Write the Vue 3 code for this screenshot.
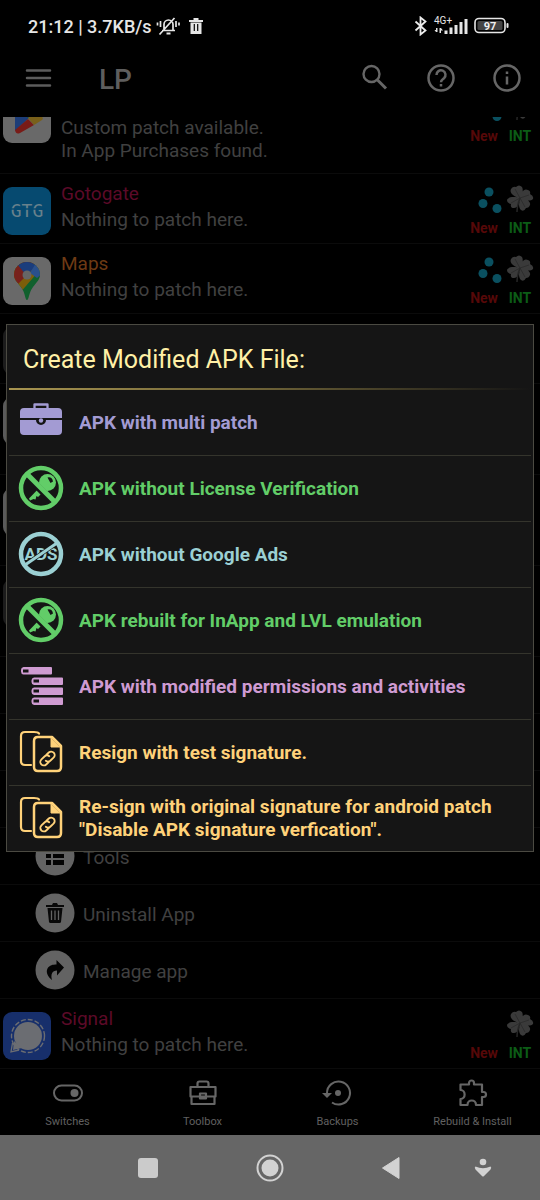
<script setup>
const apps = [
  { id: 'play', icon: 'play', title: '', tone: 'rose', lines: ['Custom patch available.', 'In App Purchases found.'], dots: true, kind: 'first' },
  { id: 'gtg', icon: 'gtg', title: 'Gotogate', tone: 'rose', lines: ['Nothing to patch here.'], dots: true },
  { id: 'maps', icon: 'maps', title: 'Maps', tone: 'orange', lines: ['Nothing to patch here.'], dots: true },
]
const covered = [
  { id: 'c1', kind: 'short', tone: 'dark' },
  { id: 'c2', kind: 'tall', tone: 'light' },
  { id: 'c3', kind: 'tall', tone: 'light' },
  { id: 'c4', kind: 'tall', tone: 'dark' },
  { id: 'c5', kind: 'sub' },
  { id: 'c6', kind: 'sub' },
  { id: 'c7', kind: 'sub' },
]
const actions = [
  { icon: 'tools', label: 'Tools' },
  { icon: 'trash', label: 'Uninstall App' },
  { icon: 'share', label: 'Manage app' },
]
const signal = { id: 'signal', icon: 'signal', title: 'Signal', tone: 'rose', lines: ['Nothing to patch here.'], dots: false }
const options = [
  { icon: 'case', tone: 'violet', label: 'APK with multi patch' },
  { icon: 'nokey', tone: 'green', label: 'APK without License Verification' },
  { icon: 'noads', tone: 'teal', label: 'APK without Google Ads' },
  { icon: 'nokey', tone: 'green', label: 'APK rebuilt for InApp and LVL emulation' },
  { icon: 'list', tone: 'orchid', label: 'APK with modified permissions and activities' },
  { icon: 'docs', tone: 'amber', label: 'Resign with test signature.' },
  { icon: 'docs', tone: 'amber', label: 'Re-sign with original signature for android patch "Disable APK signature verfication".' },
]
const rows = [...apps, ...covered.map(c => ({ ...c, covered: true })), ...actions.map(a => ({ ...a, id: a.label, action: true })), signal]
</script>

<template>
  <div class="screen">
    <header class="status">
      <span class="clock">21:12 | 3.7KB/s</span>
      <svg class="bell" width="24" height="20" viewBox="0 0 24 20" fill="none" stroke="#e6e6e6" stroke-width="1.7">
        <path d="M6 14.5h13M8 14V8.5a4.5 4.5 0 0 1 9 0V14M18 14.5l-1-1M3.5 18.5L18.5 2M4.5 5v6M1.500 6.500v3M20 5v6M23 6.500v3" />
        <path d="M10.500 17.500h4" stroke-width="2" />
      </svg>
      <svg class="bin" width="16" height="18" viewBox="0 0 16 18" fill="#e6e6e6" fill-rule="evenodd">
        <path d="M1 3h4.500V1h5v2H15v2H1zM2.500 5.500h11V17h-11zM5.700 7v7h1.200V7zM9.100 7v7h1.200V7z" />
      </svg>
      <div class="status-right">
        <svg width="14" height="20" viewBox="0 0 14 20" fill="none" stroke="#ececec" stroke-width="1.8"><path d="M1.500 5.500l10 9-5 4V1.500l5 4-10 9" /></svg>
        <svg width="36" height="20" viewBox="0 0 36 20" fill="#e6e6e6">
          <text x="1" y="8" font-family="Roboto, sans-serif" font-weight="400" font-size="10">4G+</text>
          <path d="M3 12h1.500v4H3zM1.500 14h1.500v2zM6.500 12H8v5H6.500zM8 12l2 2.500H8zM11.500 14.500h3V18h-3zM16.500 11.500h3V18h-3zM21.500 9h3v9h-3zM26.500 6h3v12h-3zM31.500 3h3v15h-3z" />
        </svg>
        <svg width="36" height="18" viewBox="0 0 36 18">
          <rect x="1" y="1.500" width="30" height="14" rx="4" fill="none" stroke="#e6e6e6" stroke-width="1.600" />
          <rect x="3.500" y="4" width="25" height="9" rx="1.500" fill="#444" />
          <rect x="32.500" y="6" width="2" height="5" rx="1" fill="#e6e6e6" />
          <text x="16" y="12.500" text-anchor="middle" font-family="Roboto, sans-serif" font-weight="700" font-size="11" fill="#f0f0f0">97</text>
        </svg>
      </div>
    </header>

    <header class="appbar">
      <button class="icon-btn" aria-label="Menu">
        <svg width="28" height="22" viewBox="0 0 28 22" stroke="#5c5c5c" stroke-width="2.500" stroke-linecap="round"><path d="M3 3.500h23M3 11h23M3 18.500h23" /></svg>
      </button>
      <h1>LP</h1>
      <div class="tools">
        <button class="icon-btn" aria-label="Search">
          <svg width="28" height="28" viewBox="0 0 28 28" fill="none" stroke="#666" stroke-width="2.400"><circle cx="10.500" cy="10" r="8" /><path d="M16.500 16l8.500 8.500" stroke-width="3" /></svg>
        </button>
        <button class="icon-btn" aria-label="Help">
          <svg width="28" height="28" viewBox="0 0 28 28" fill="none" stroke="#666" stroke-width="2.500"><circle cx="14" cy="14" r="12.500" /><path d="M9.500 11a4.500 4.500 0 1 1 7.500 3.200c-1.800 1.400-3 2-3 4M14 20v2.500" /></svg>
        </button>
        <button class="icon-btn" aria-label="Information">
          <svg width="28" height="28" viewBox="0 0 28 28" fill="none" stroke="#666" stroke-width="2.500"><circle cx="14" cy="14" r="12.500" /><path d="M14 12.500v8M14 7.500v2.500" /></svg>
        </button>
      </div>
    </header>

    <main class="list">
      <div v-for="r in rows" :key="r.id" class="row" :class="[r.kind, { sub: r.action || r.kind === 'sub' }]">
        <template v-if="r.covered">
          <span v-if="r.kind !== 'sub'" class="tile" :class="r.tone"></span>
        </template>
        <template v-else-if="r.action">
          <svg class="round" width="40" height="40" viewBox="0 0 40 40">
            <circle cx="20" cy="20" r="19.500" fill="#636363" />
            <g v-if="r.icon === 'tools'" fill="#030303"><path d="M11 11h5v5h-5zM18 11h11v5H18zM11 18h5v4h-5zM18 18h11v4H18zM11 24h5v5h-5zM18 24h11v5H18z" /></g>
            <g v-else-if="r.icon === 'trash'">
              <path d="M11 12h6l1-2h4l1 2h6v2H11zM12.500 15h15l-1.500 14q-.3 1-1.500 1h-9q-1.200 0-1.500-1z" fill="#080808" />
              <path d="M16.500 17.500v9.500M20 17.500v9.500M23.500 17.500v9.500" stroke="#636363" stroke-width="1.300" />
            </g>
            <path v-else d="M21.500 10l7.500 7.500-7 8v-5c-5 0-6.500 4-5 9.500-4-3-6.500-8-4.500-11.500 2-3.500 5.500-4 9-4z" fill="#030303" />
          </svg>
          <button class="sub-label">{{ r.label }}</button>
        </template>
        <template v-else>
          <svg class="tile-svg" width="48" height="48" viewBox="0 0 48 48">
            <rect width="48" height="48" rx="9" :fill="r.icon === 'gtg' ? '#064a70' : r.icon === 'signal' ? '#172f6b' : '#696969'" />
            <g v-if="r.icon === 'play'">
              <path d="M12 8v28l14-13z" fill="#1d3d78" /><path d="M12 35q1 5 5 3l14-8-6-6z" fill="#791b17" /><path d="M25 23l6 7 8-5q2-2-1-4l-8-4z" fill="#79601a" /><path d="M12 8l13 15 6-8z" fill="#155c2c" />
            </g>
            <g v-else-if="r.icon === 'gtg'">
              <text x="24" y="30" text-anchor="middle" font-family="'DejaVu Sans Mono', monospace" font-size="18" fill="#68818c">GTG</text>
              <path d="M5 22h38" stroke="#064a70" stroke-width="1.500" />
            </g>
            <g v-else-if="r.icon === 'maps'">
              <clipPath id="pin"><path d="M24 43c-2 0-1.500-7-6-13-4-5-7-8-7-12a13 13 0 0 1 26 0c0 4-3 7-7 12-4.500 6-4 13-6 13z" /></clipPath>
              <g clip-path="url(#pin)">
                <path d="M0 0h48v48H0z" fill="#10602d" /><path d="M0 0h48L10 44H0z" fill="#7c5e0a" /><path d="M0 0h35L24 18 12 30H0z" fill="#77211c" /><path d="M14 7L24 19 34 7V0H14z" fill="#1b3d7c" /><path d="M33 6l8 9-7 6-7-5z" fill="#2a508c" />
              </g>
              <circle cx="24" cy="18" r="4.500" fill="#666" />
            </g>
            <g v-else>
              <circle cx="25" cy="24" r="14" fill="#6b6d72" /><path d="M11 29l-1 9 9-2z" fill="#6b6d72" />
              <circle cx="25" cy="24" r="16.500" fill="none" stroke="#6b6d72" stroke-width="1.400" stroke-dasharray="5 2" />
              <path d="M9.500 31L8 40l8-2" fill="none" stroke="#6b6d72" stroke-width="1.300" />
            </g>
          </svg>
          <div class="info">
            <h2 :class="r.tone">{{ r.title }}</h2>
            <p v-for="l in r.lines" :key="l">{{ l }}</p>
          </div>
          <div class="badges">
            <div class="badge">
              <svg width="36" height="30" viewBox="0 0 36 30"><g v-if="r.dots" fill="#0a5060"><circle cx="23" cy="8" r="4.500" /><circle cx="17" cy="19.500" r="4.500" /><circle cx="31" cy="24.500" r="4.500" /></g></svg>
              <span class="new">New</span>
            </div>
            <div class="badge">
              <svg width="28" height="30" viewBox="0 0 28 30" fill="#3a3a3a">
                <path d="M14 14C8 13 3 9 5 5q2-3 5-2 3-3 6 0c2 4-.5 8-2 11zM14 14c1-6 4-10 8-8q3 1 2 4 4 2 3 5c-3 3-9 1-13-1zM14 14c6 1 11 3 10 7q-1 3-4 3-2 4-5 2c-3-3-2-8-1-12zM14 14c-1 5-2 10-6 10q-4 0-3-4-4-1-4-4c2-4 9-3 13-2z" />
                <path d="M14 14q-3 8-3 14" stroke="#262626" stroke-width="1.500" fill="none" />
                <path d="M9 5l5 9M23 11l-9 3M19 23l-5-9M5 19l9-5" stroke="#2a2a2a" stroke-width=".8" />
              </svg>
              <span class="int">INT</span>
            </div>
          </div>
        </template>
      </div>
    </main>

    <nav class="tabs">
      <button>
        <svg width="32" height="28" viewBox="0 0 32 28"><rect x="2" y="6.500" width="28" height="15" rx="7.500" fill="none" stroke="#666" stroke-width="2" /><circle cx="22.500" cy="14" r="4" fill="#666" /></svg>
        <span>Switches</span>
      </button>
      <button>
        <svg width="32" height="28" viewBox="0 0 32 28" fill="none" stroke="#666" stroke-width="2.200" stroke-linejoin="round"><path d="M10.500 7V4.500q0-2 2-2h7q2 0 2 2V7M3.500 8h25v9.500h-25zM4.500 18v7h23v-7M13 14.500h6v5h-6z" /></svg>
        <span>Toolbox</span>
      </button>
      <button>
        <svg width="32" height="28" viewBox="0 0 32 28" fill="none" stroke="#666" stroke-width="2"><path d="M5 14A11.500 11.500 0 1 1 10 23.500" /><path d="M0 14h10l-5 5z" fill="#666" stroke="none" /><circle cx="16" cy="14" r="3" fill="#666" stroke="none" /></svg>
        <span>Backups</span>
      </button>
      <button>
        <svg width="32" height="28" viewBox="0 0 32 28" fill="none" stroke="#666" stroke-width="2.200" stroke-linejoin="round"><path d="M3.500 5.500H12V4a2.500 2.500 0 0 1 5 0v1.500h8V13H26.500a2.500 2.500 0 0 1 0 5H25v8h-6c0-6-8.500-6-8.500 0h-7v-6c5.500 0 5.500-9 0-9z" /></svg>
        <span>Rebuild &amp; Install</span>
      </button>
    </nav>

    <nav class="system">
      <span></span>
      <button aria-label="Recent apps"><svg width="20" height="20"><rect width="20" height="20" rx="3" fill="#cbcbcb" /></svg></button>
      <button aria-label="Home"><svg width="28" height="28"><circle cx="14" cy="14" r="12.500" fill="none" stroke="#d2d2d2" stroke-width="2" /><circle cx="14" cy="14" r="8.500" fill="#d2d2d2" /></svg></button>
      <button aria-label="Back"><svg width="20" height="24" viewBox="0 0 20 24"><path d="M18 1.500v21L1.500 12z" fill="#d2d2d2" stroke="#d2d2d2" stroke-linejoin="round" /></svg></button>
      <button aria-label="Hide bar"><svg width="18" height="20" viewBox="0 0 18 20" fill="#d2d2d2"><circle cx="9" cy="4" r="3.300" /><path d="M1.500 8.500Q9 12 16.500 8.500q1.500 1 0 3L10 18q-1 1-2 0l-6.500-6.500q-1.500-2 0-3z" /></svg></button>
    </nav>

    <div class="overlay">
      <section class="dialog" role="dialog" aria-labelledby="dialog-title">
        <h2 id="dialog-title">Create Modified APK File:</h2>
        <div class="rule"></div>
        <ul>
          <li v-for="(o, i) in options" :key="i">
            <button :class="o.tone">
              <svg width="46" height="46" viewBox="0 0 46 46">
                <g v-if="o.icon === 'case'">
                  <path d="M16.500 10V5.500h13V10" fill="none" stroke="currentColor" stroke-width="2.300" stroke-linejoin="round" />
                  <path d="M6 9h34q4 0 4 4v6H2v-6q0-4 4-4zM2 21h16a5 5 0 0 0 10 0h16v11q0 4-4 4H6q-4 0-4-4z" fill="currentColor" />
                  <path d="M19 20a4 4 0 0 0 8 0z" fill="#151515" /><circle cx="23" cy="21.500" r="2.200" fill="currentColor" />
                </g>
                <g v-else-if="o.icon === 'nokey'">
                  <path d="M12 35.500l-1-2L25 19l4 4-9 9-1.500-1-1 3.500-2-.5z" fill="currentColor" />
                  <circle cx="29.500" cy="17.500" r="8.500" fill="currentColor" />
                  <path d="M29.500 12.500q4.500-1 5.500 4l-2.500 1.500z" fill="#151515" />
                  <path d="M7 9l30 30" stroke="#151515" stroke-width="7" />
                  <circle cx="23" cy="23" r="20" fill="none" stroke="currentColor" stroke-width="4.500" />
                  <path d="M9 9l28 28" stroke="currentColor" stroke-width="5" />
                </g>
                <g v-else-if="o.icon === 'noads'">
                  <text x="23" y="29" text-anchor="middle" font-family="Roboto, sans-serif" font-weight="700" font-size="17" fill="currentColor">ADS</text>
                  <path d="M7 34L39 12" stroke="#151515" stroke-width="4.500" />
                  <circle cx="23" cy="23" r="20" fill="none" stroke="currentColor" stroke-width="4.500" />
                  <path d="M7 34L39 12" stroke="currentColor" stroke-width="3" />
                </g>
                <g v-else-if="o.icon === 'list'" fill="currentColor" fill-rule="evenodd">
                  <path d="M5.500 4H33q1 0 1 1v5.500q0 1-1 1H5.500a3 3 0 0 1-2.500-3v-1.500a3 3 0 0 1 2.500-3zM5 6.500v3h5.500v-3z" />
                  <path v-for="y in [0, 10, 20]" :key="y" :transform="`translate(0 ${y})`" d="M16 14.500h28q1 0 1 1V21q0 1-1 1H16a3 3 0 0 1-2.500-3v-1.500a3 3 0 0 1 2.500-3zM15.500 16.500v3H21v-3z" />
                </g>
                <g v-else fill="none" stroke="currentColor" stroke-width="2.200" stroke-linejoin="round" stroke-linecap="round">
                  <path d="M13 36H7q-4 0-4-4V7q0-4 4-4h9q4 0 5 1.500" />
                  <path d="M20 8h14l9 9v21q0 4-4 4H20q-4 0-4-4V12q0-4 4-4z" stroke-width="2.500" />
                  <path d="M33 9v9h9z" fill="currentColor" stroke-width="1" />
                  <g transform="rotate(-43 29.500 29.500)" stroke-width="1.900"><path d="M28 33h-3.500a3.500 3.500 0 0 1 0-7H29a3.500 3.500 0 0 1 3.300 3M31 26h3.500a3.500 3.500 0 0 1 0 7H30a3.500 3.500 0 0 1-3.300-3" /></g>
                </g>
              </svg>
              <span>{{ o.label }}</span>
            </button>
          </li>
        </ul>
      </section>
    </div>
  </div>
</template>

<style>
html, body { background: #000; }
</style>

<style scoped>
* { box-sizing: border-box; }
h1, h2, p, ul { margin: 0; padding: 0; font-weight: 400; }
svg { display: block; flex: none; }
button { font: inherit; color: inherit; background: none; border: 0; padding: 0; margin: 0; }
.screen { position: relative; height: 100vh; display: flex; flex-direction: column; background: #000; font-family: Roboto, sans-serif; overflow: hidden; }
.status { flex: none; display: flex; align-items: center; height: 52px; padding: 0 30px 0 28px; color: #e6e6e6; font-size: 18px; font-weight: 500; }
.bell { margin-left: 4px; }
.bin { margin-left: 8px; }
.status-right { margin-left: auto; display: flex; align-items: center; gap: 5px; }
.appbar { flex: none; display: flex; align-items: center; height: 65px; padding: 0 19px 13px 24px; }
.appbar h1 { margin-left: 47px; font-size: 28px; font-weight: 500; color: #5e5e5e; line-height: 32px; padding-top: 4px; }
.tools { margin-left: auto; display: flex; gap: 38px; }
.list { flex: 1; min-height: 0; overflow: hidden; display: flex; flex-direction: column; justify-content: flex-end; }
.row { flex: none; display: flex; align-items: flex-start; height: 70px; padding: 0 6px 0 3px; border-bottom: 1px solid #0b0b0b; }
.row.first { height: 92px; }
.row.tall { height: 91px; }
.row.sub { height: 57px; align-items: center; padding-left: 35px; }
.tile, .tile-svg { margin-top: 13px; }
.tile { width: 48px; height: 48px; border-radius: 9px; }
.tile.dark { background: #1c1c1c; }
.tile.light { background: #5a5a5a; }
.info { margin: 8px 0 0 10px; font-size: 19px; line-height: 23px; color: #404040; }
.info h2 { font-size: 19px; line-height: 23px; min-height: 23px; margin-bottom: 3px; }
.rose { color: #5c0a28; }
.orange { color: #6e3a14; }
.badges { margin-left: auto; display: flex; gap: 4px; padding-top: 10px; font-size: 14px; line-height: 16px; font-weight: 700; }
.badge { display: flex; flex-direction: column; align-items: center; gap: 6px; }
.new { color: #560808; }
.int { color: #0c5c16; }
.sub-label { margin-left: 8px; padding-top: 2px; font-size: 19px; line-height: 23px; color: #404040; }
.tabs { flex: none; display: grid; grid-template-columns: repeat(4, 1fr); height: 66px; }
.tabs button { display: flex; flex-direction: column; align-items: center; padding-top: 10px; gap: 8px; font-size: 11px; line-height: 14px; color: #616161; }
.system { flex: none; display: grid; grid-template-columns: 87fr 122fr 121fr 122fr 61fr 27fr; align-items: center; height: 65px; background: #666; }
.system button { display: flex; justify-content: center; }
.overlay { position: absolute; inset: 40px 0 65px; padding: 0 6px; display: flex; align-items: center; }
.dialog { width: 100%; background: #151515; border: 1px solid #4b4a42; padding: 0 2px; }
.dialog h2 { padding: 20px 14px 13px; font-size: 25px; line-height: 30px; color: #fff0a6; }
.rule { height: 2px; background: linear-gradient(90deg, #a89550, #6b6036 50%, #151515); }
.dialog ul { list-style: none; }
.dialog li + li { border-top: 1px solid #34342c; }
.dialog li button { display: flex; align-items: center; width: 100%; min-height: 65px; padding: 0 9px; gap: 15px; text-align: left; font-size: 19px; line-height: 23px; font-weight: 700; }
.violet { color: #a39bd3; }
.green { color: #62cd68; }
.teal { color: #9bd0d3; }
.orchid { color: #cf9bd2; }
.amber { color: #ffd27a; }
</style>
